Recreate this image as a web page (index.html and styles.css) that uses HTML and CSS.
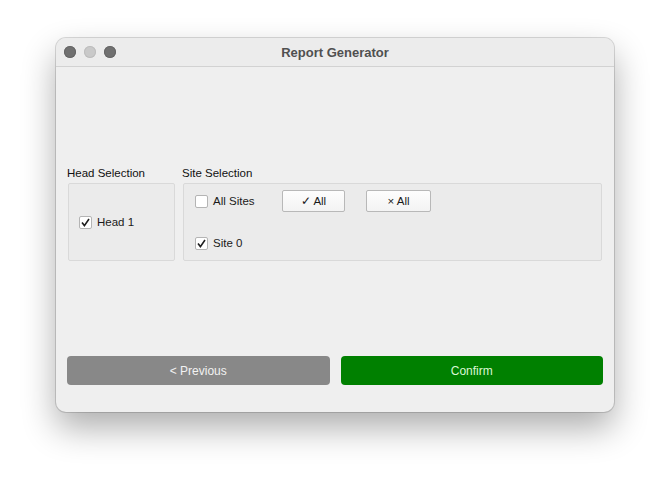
FILE: index.html
```html
<!DOCTYPE html>
<html lang="en">
<head>
  <meta charset="UTF-8">
  <meta name="viewport" content="width=device-width, initial-scale=1.0">
  <title>Report Generator</title>
  <link rel="stylesheet" href="styles.css">
</head>
<body>
  <div class="window">
    <div class="title-bar">
      <div class="lights">
        <span class="light dark"></span>
        <span class="light pale"></span>
        <span class="light dark"></span>
      </div>
      <div class="title">Report Generator</div>
      <div></div>
    </div>

    <div class="content">
      <div class="groups">
        <div class="group head-group">
          <div class="group-label">Head Selection</div>
          <div class="group-box head-box">
            <label class="check">
              <span class="box checked">
                <svg viewBox="0 0 13 13" width="13" height="13"><path d="M3 6.6 L5.4 9.6 L10 3" fill="none" stroke="#1e1e1e" stroke-width="1.6"/></svg>
              </span>
              Head 1
            </label>
          </div>
        </div>

        <div class="group site-group">
          <div class="group-label">Site Selection</div>
          <div class="group-box site-box">
            <div class="site-row">
              <label class="check all-sites">
                <span class="box"></span>
                All Sites
              </label>
              <button class="small-button">✓ All</button>
              <button class="small-button wide">× All</button>
            </div>
            <div class="site-row">
              <label class="check">
                <span class="box checked">
                  <svg viewBox="0 0 13 13" width="13" height="13"><path d="M3 6.6 L5.4 9.6 L10 3" fill="none" stroke="#1e1e1e" stroke-width="1.6"/></svg>
                </span>
                Site 0
              </label>
            </div>
          </div>
        </div>
      </div>

      <div class="actions">
        <button class="big-button previous">&lt; Previous</button>
        <button class="big-button confirm">Confirm</button>
      </div>
    </div>
  </div>
</body>
</html>
```

FILE: styles.css
```css
html, body {
  height: 100%;
}

body {
  margin: 0;
  background: #ffffff;
  font-family: "Liberation Sans", Arial, sans-serif;
  padding-top: 38px;
  box-sizing: border-box;
}

.window {
  width: 558px;
  height: 374px;
  margin-left: 56px;
  background-color: #efefef;
  border-radius: 10px;
  overflow: hidden;
  box-shadow: 0 0 0 1px rgba(0,0,0,0.14), 0 16px 34px rgba(0,0,0,0.32);
  display: flex;
  flex-direction: column;
}

.title-bar {
  height: 28px;
  border-bottom: 1px solid #d2d2d2;
  background-color: #ececec;
  display: grid;
  grid-template-columns: 1fr auto 1fr;
  align-items: center;
}

.lights {
  display: flex;
  gap: 8px;
  padding-left: 8px;
}

.light {
  width: 12px;
  height: 12px;
  border-radius: 50%;
}

.light.dark {
  background-color: #707070;
  box-shadow: inset 0 0 0 1px #666;
}

.light.pale {
  background-color: #c9c9c9;
  box-shadow: inset 0 0 0 1px #bdbdbd;
}

.title {
  font-size: 13px;
  font-weight: bold;
  color: #505050;
}

.content {
  flex: 1;
  padding: 99px 11px 27px 11px;
  display: flex;
  flex-direction: column;
}

.groups {
  display: flex;
  gap: 6px;
}

.head-group {
  width: 109px;
}

.site-group {
  flex: 1;
}

.group-label {
  font-size: 11.5px;
  line-height: 14px;
  color: #111;
  margin-bottom: 3px;
}

.group-box {
  margin: 0 1px;
  height: 78px;
  box-sizing: border-box;
  border: 1px solid #d9d9d9;
  border-radius: 2px;
  background-color: #ebebeb;
}

.head-box {
  display: flex;
  align-items: center;
  padding-left: 10px;
}

.site-box {
  padding: 6px 11px;
  display: flex;
  flex-direction: column;
  gap: 20px;
}

.site-row {
  height: 22px;
  display: flex;
  align-items: center;
}

.check {
  display: flex;
  align-items: center;
  gap: 5px;
  font-size: 11.5px;
  color: #1a1a1a;
}

.all-sites {
  width: 87px;
}

.box {
  width: 13px;
  height: 13px;
  box-sizing: border-box;
  border: 1px solid #b4b4b4;
  border-radius: 2px;
  background-color: #ffffff;
  display: flex;
}

.box svg {
  margin: -1px;
}

.small-button {
  width: 63px;
  height: 22px;
  margin-right: 21px;
  border: 1px solid #b8b8b8;
  border-radius: 2px;
  background: linear-gradient(#fdfdfd, #f3f3f3);
  font-family: "Liberation Sans", Arial, sans-serif;
  font-size: 11.5px;
  color: #1a1a1a;
  padding: 0;
}

.small-button.wide {
  width: 65px;
}

.actions {
  margin-top: auto;
  display: flex;
  gap: 11px;
}

.big-button {
  flex: 1;
  height: 29px;
  border: none;
  border-radius: 4px;
  font-family: "Liberation Sans", Arial, sans-serif;
  font-size: 12px;
}

.previous {
  background-color: #888888;
  color: #f2f2f2;
}

.confirm {
  background-color: #008000;
  color: #dcf7d4;
}
```
